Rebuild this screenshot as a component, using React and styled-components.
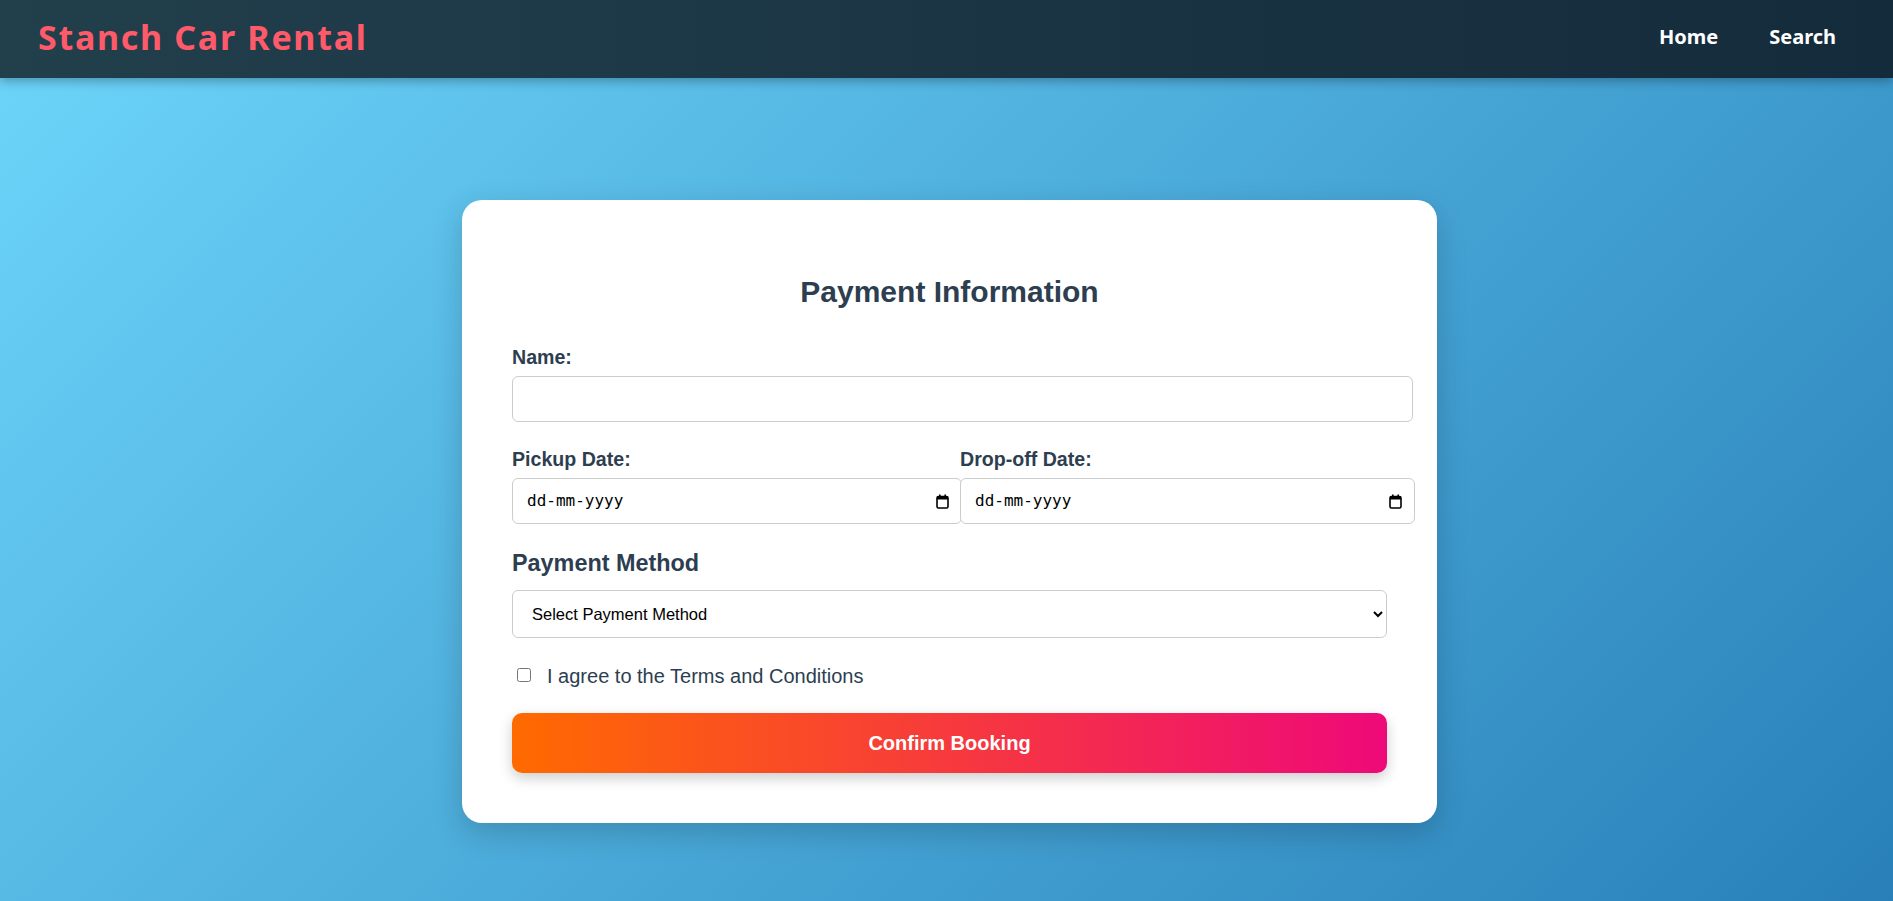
import styled, { createGlobalStyle } from "styled-components";

const GlobalStyle = createGlobalStyle`
  html, body {
    margin: 0;
    padding: 0;
  }
  body {
    font-family: "Liberation Sans", Arial, sans-serif;
  }
  * {
    box-sizing: border-box;
  }
`;

const Page = styled.div`
  min-height: 100vh;
  background: linear-gradient(135deg, #6dd5fa 0%, #2980b9 100%);
  display: flex;
  flex-direction: column;
`;

const Header = styled.header`
  height: 78px;
  padding: 0 57px 0 38px;
  display: flex;
  align-items: center;
  justify-content: space-between;
  background: linear-gradient(90deg, #223f4c, #142b3c);
  box-shadow: 0 3px 10px rgba(0, 0, 0, 0.3);
  position: relative;
  z-index: 5;

  h1 {
    margin: -4px 0 0;
    font-family: "Noto Sans", "Open Sans", sans-serif;
    font-size: 34px;
    font-weight: 700;
    letter-spacing: 1.7px;
    color: #ff5a6a;
    line-height: 1;
  }
`;

const Nav = styled.nav`
  display: flex;
  gap: 51px;
  margin-top: -6px;

  a {
    font-family: "Noto Sans", "Open Sans", sans-serif;
    font-size: 20px;
    font-weight: 700;
    color: #fff;
    text-decoration: none;
  }
`;

const Main = styled.main`
  display: flex;
  justify-content: center;
  padding: 122px 0 78px 6px;
`;

const Card = styled.form`
  width: 975px;
  padding: 50px;
  background: #fff;
  border-radius: 20px;
  box-shadow: 0 10px 30px rgba(0, 0, 0, 0.18);
  color: #2c3e50;
`;

const Title = styled.h2`
  margin: 24px 0 0;
  font-size: 30px;
  line-height: 36px;
  font-weight: 700;
  text-align: center;
  color: #2c3e50;
`;

const Field = styled.div`
  margin-top: ${(p) => p.$top || 0}px;
`;

const Label = styled.label`
  display: block;
  font-size: 19.6px;
  line-height: 24px;
  font-weight: 700;
  color: #2c3e50;
  margin-bottom: 7px;
`;

const TextInput = styled.input`
  display: block;
  box-sizing: content-box;
  width: 100%;
  height: 20px;
  padding: 12px;
  border: 1px solid #ccc;
  border-radius: 6px;
  font-family: "Liberation Sans", Arial, sans-serif;
  font-size: 16px;
  line-height: 20px;
  background: #fff;
  outline: none;
`;

const DateRow = styled.div`
  margin-top: 25px;
  display: grid;
  grid-template-columns: 422px 1fr;
  column-gap: 26px;
`;

const DateBox = styled.div`
  position: relative;
`;

const DateInput = styled(TextInput)`
  font-family: "DejaVu Sans Mono", "Liberation Mono", monospace;
  font-size: 16px;
  padding-left: 14px;

  &::placeholder {
    color: #000;
    opacity: 1;
  }
`;

const CalendarIcon = styled.svg`
  position: absolute;
  top: 16px;
  right: ${(p) => p.$right}px;
  width: 13px;
  height: 15px;
  pointer-events: none;
`;

const SectionTitle = styled.h3`
  margin: 25px 0 13px;
  font-size: 23.4px;
  line-height: 28px;
  font-weight: 700;
  color: #2c3e50;
`;

const Select = styled.select`
  display: block;
  width: 100%;
  height: 48px;
  padding: 0 10px 0 15px;
  border: 1px solid #ccc;
  border-radius: 6px;
  background: #fff;
  font-family: "Liberation Sans", Arial, sans-serif;
  font-size: 16.5px;
  color: #000;
`;

const CheckRow = styled.label`
  margin-top: 26px;
  display: flex;
  align-items: center;
  font-size: 20px;
  line-height: 24px;
  color: #2c3e50;

  input {
    width: 14px;
    height: 14px;
    margin: -2px 16px 0 5px;
  }
`;

const Button = styled.button`
  margin-top: 25px;
  width: 100%;
  height: 60px;
  border: none;
  border-radius: 10px;
  background: linear-gradient(90deg, #ff6a00, #ee0979);
  color: #fff;
  font-family: "Liberation Sans", Arial, sans-serif;
  font-size: 20px;
  font-weight: 700;
  box-shadow: 0 5px 14px rgba(0, 0, 0, 0.2);
  cursor: pointer;
`;

function Calendar({ right }) {
  return (
    <CalendarIcon $right={right} viewBox="0 0 13 15">
      <rect x="1" y="2.5" width="11" height="11.5" rx="1.5" fill="none" stroke="#000" strokeWidth="1.6" />
      <rect x="1" y="2.5" width="11" height="3" fill="#000" />
      <rect x="3" y="0.5" width="1.6" height="3" fill="#000" />
      <rect x="8.4" y="0.5" width="1.6" height="3" fill="#000" />
    </CalendarIcon>
  );
}

export default function App() {
  return (
    <>
      <GlobalStyle />
      <Page>
        <Header>
          <h1>Stanch Car Rental</h1>
          <Nav>
            <a href="#">Home</a>
            <a href="#">Search</a>
          </Nav>
        </Header>
        <Main>
          <Card onSubmit={(e) => e.preventDefault()}>
            <Title>Payment Information</Title>
            <Field $top={35}>
              <Label htmlFor="name">Name:</Label>
              <TextInput id="name" type="text" />
            </Field>
            <DateRow>
              <div>
                <Label htmlFor="pickup">Pickup Date:</Label>
                <DateBox>
                  <DateInput id="pickup" type="text" placeholder="dd-mm-yyyy" />
                  <Calendar right={-15} />
                </DateBox>
              </div>
              <div>
                <Label htmlFor="dropoff">Drop-off Date:</Label>
                <DateBox>
                  <DateInput id="dropoff" type="text" placeholder="dd-mm-yyyy" />
                  <Calendar right={-15} />
                </DateBox>
              </div>
            </DateRow>
            <SectionTitle>Payment Method</SectionTitle>
            <Select defaultValue="">
              <option value="">Select Payment Method</option>
              <option value="card">Credit Card</option>
              <option value="paypal">PayPal</option>
            </Select>
            <CheckRow>
              <input type="checkbox" />
              I agree to the Terms and Conditions
            </CheckRow>
            <Button type="submit">Confirm Booking</Button>
          </Card>
        </Main>
      </Page>
    </>
  );
}
